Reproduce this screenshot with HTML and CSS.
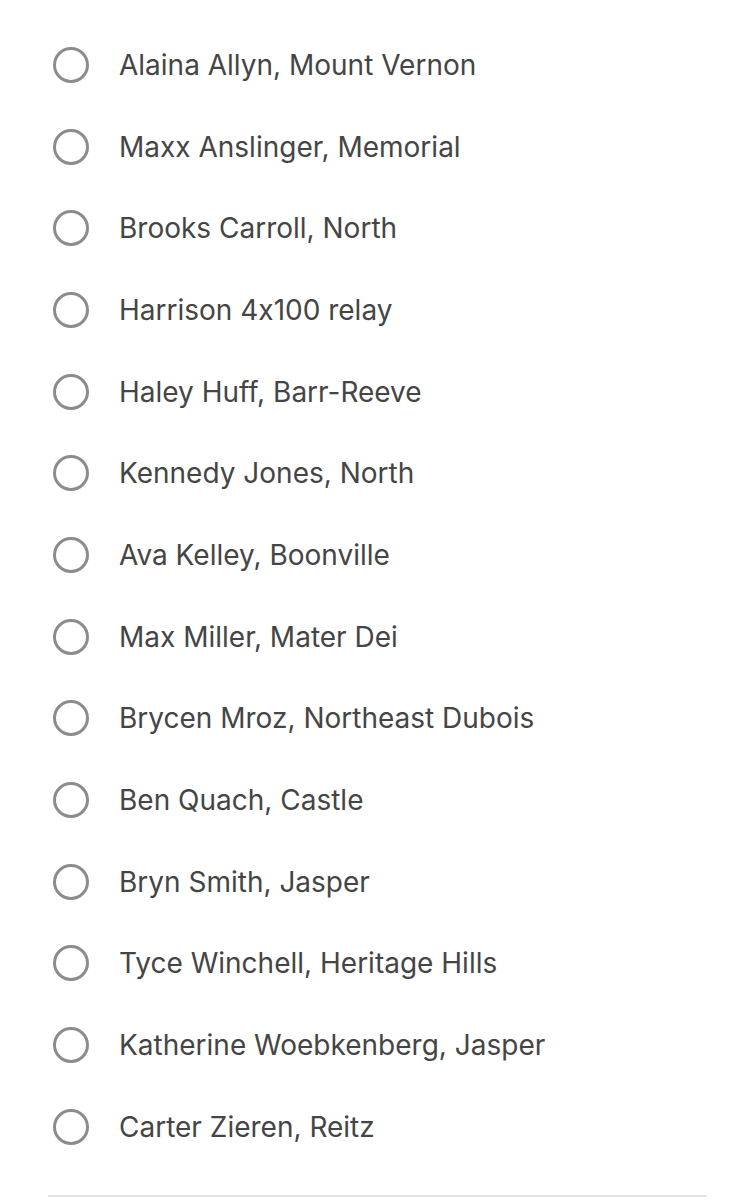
FILE: index.html
```html
<!DOCTYPE html>
<html lang="en">
<head>
  <meta charset="UTF-8">
  <title>Vote</title>
  <meta name="viewport" content="width=device-width, initial-scale=1.0">
  <link rel="stylesheet" href="styles.css">
</head>
<body>
  <ul class="choices">
    <li><span class="radio"></span>Alaina Allyn, Mount Vernon</li>
    <li><span class="radio"></span>Maxx Anslinger, Memorial</li>
    <li><span class="radio"></span>Brooks Carroll, North</li>
    <li><span class="radio"></span>Harrison 4x100 relay</li>
    <li><span class="radio"></span>Haley Huff, Barr-Reeve</li>
    <li><span class="radio"></span>Kennedy Jones, North</li>
    <li><span class="radio"></span>Ava Kelley, Boonville</li>
    <li><span class="radio"></span>Max Miller, Mater Dei</li>
    <li><span class="radio"></span>Brycen Mroz, Northeast Dubois</li>
    <li><span class="radio"></span>Ben Quach, Castle</li>
    <li><span class="radio"></span>Bryn Smith, Jasper</li>
    <li><span class="radio"></span>Tyce Winchell, Heritage Hills</li>
    <li><span class="radio"></span>Katherine Woebkenberg, Jasper</li>
    <li><span class="radio"></span>Carter Zieren, Reitz</li>
  </ul>
  <div class="divider"></div>
</body>
</html>
```

FILE: styles.css
```css
* { box-sizing: border-box; }

body {
  margin: 0;
  background: #ffffff;
  font-family: Inter, "Open Sans", sans-serif;
  font-feature-settings: "calt" 0;
}

.choices {
  list-style: none;
  margin: 0;
  padding: 24px 0 0 0;
}

.choices li {
  display: flex;
  align-items: center;
  height: 81.7px;
  padding-left: 53px;
  font-size: 28px;
  color: #454545;
}

.radio {
  width: 36px;
  height: 36px;
  border: 3px solid #8c8c8c;
  border-radius: 50%;
  margin-right: 30px;
  flex-shrink: 0;
}

.divider {
  margin: 27px 43px 0 48px;
  height: 2px;
  background: #e4e4e4;
}
```
